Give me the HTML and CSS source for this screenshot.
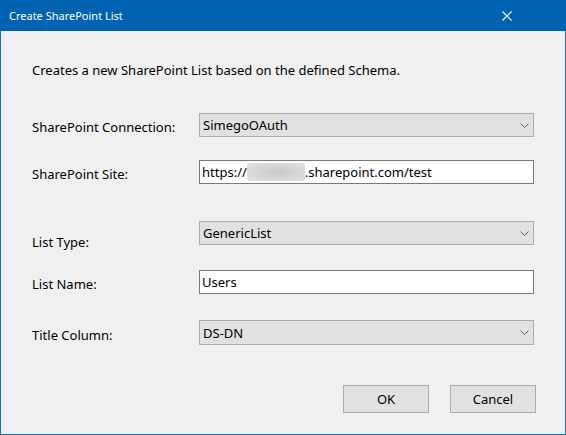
FILE: index.html
```html
<!DOCTYPE html>
<html>
<head>
<meta charset="utf-8">
<link rel="stylesheet" href="styles.css">
</head>
<body>
<div class="window">
  <div class="titlebar">
    <span class="title">Create SharePoint List</span>
    <svg class="close" width="10" height="10" viewBox="0 0 10 10"><path d="M0.5 0.5 L9.5 9.5 M9.5 0.5 L0.5 9.5" stroke="#ffffff" stroke-width="1.1" fill="none"/></svg>
  </div>
  <div class="content">
    <p class="desc">Creates a new SharePoint List based on the defined Schema.</p>
    <div class="row r1">
      <label class="lbl">SharePoint Connection:</label>
      <div class="combo"><span>SimegoOAuth</span><svg class="chev" width="9" height="5" viewBox="0 0 9 5"><path d="M0.5 0.5 L4.5 4.5 L8.5 0.5" stroke="#606060" stroke-width="1" fill="none"/></svg></div>
    </div>
    <div class="row r2">
      <label class="lbl">SharePoint Site:</label>
      <div class="textbox"><span>https://</span><span class="blur"></span><span>.sharepoint.com/test</span></div>
    </div>
    <div class="row r3">
      <label class="lbl low">List Type:</label>
      <div class="combo"><span>GenericList</span><svg class="chev" width="9" height="5" viewBox="0 0 9 5"><path d="M0.5 0.5 L4.5 4.5 L8.5 0.5" stroke="#606060" stroke-width="1" fill="none"/></svg></div>
    </div>
    <div class="row r4">
      <label class="lbl">List Name:</label>
      <div class="textbox"><span>Users</span></div>
    </div>
    <div class="row r5">
      <label class="lbl">Title Column:</label>
      <div class="combo"><span>DS-DN</span><svg class="chev" width="9" height="5" viewBox="0 0 9 5"><path d="M0.5 0.5 L4.5 4.5 L8.5 0.5" stroke="#606060" stroke-width="1" fill="none"/></svg></div>
    </div>
    <div class="buttons">
      <button class="btn">OK</button>
      <button class="btn">Cancel</button>
    </div>
  </div>
</div>
</body>
</html>
```
FILE: styles.css
```css
html, body {
  margin: 0;
  padding: 0;
}
body {
  width: 566px;
  height: 435px;
  overflow: hidden;
  font-family: "Noto Sans", "Open Sans", sans-serif;
  font-size: 13px;
  color: #000;
}
.window {
  box-sizing: border-box;
  width: 566px;
  height: 435px;
  border: 1px solid #1a6ec0;
  border-top: none;
  background: #f0f0f0;
  display: flex;
  flex-direction: column;
}
.titlebar {
  height: 31px;
  margin: 0 -1px;
  background: #0063b1;
  color: #fff;
  display: flex;
  align-items: center;
  justify-content: space-between;
  padding: 0 54px 0 9px;
  box-sizing: border-box;
  flex-shrink: 0;
}
.title {
  font-family: "Noto Sans", sans-serif;
  font-size: 11px;
  padding-bottom: 1px;
}
.close {
  display: block;
}
.content {
  padding-left: 31px;
  display: flex;
  flex-direction: column;
}
.desc {
  margin: 0;
  height: 20px;
  line-height: 20px;
  margin-top: 29px;
}
.row {
  display: flex;
  align-items: center;
  height: 24px;
}
.r1 { margin-top: 33px; }
.r2 { margin-top: 23px; }
.r3 { margin-top: 37px; }
.r4 { margin-top: 25px; }
.r5 { margin-top: 26px; height: 25px; }
.lbl {
  width: 167px;
  flex-shrink: 0;
  padding-top: 4px;
}
.lbl.low {
  padding-top: 18px;
}
.combo, .textbox {
  box-sizing: border-box;
  width: 335px;
  height: 100%;
  display: flex;
  align-items: center;
}
.combo {
  background: #e1e1e1;
  border: 1px solid #adadad;
  justify-content: space-between;
  padding-right: 4px;
  padding-left: 3px;
}
.textbox {
  background: #fff;
  border: 1px solid #7a7a7a;
  padding-left: 2px;
}
.blur {
  display: inline-block;
  width: 58px;
  height: 18px;
  background: radial-gradient(ellipse at 55% 50%, #c9c9c9 0%, #d6d6d6 50%, #e4e4e4 100%);
  border-radius: 2px;
}
.chev {
  display: block;
}
.buttons {
  display: flex;
  justify-content: flex-end;
  gap: 21px;
  padding-right: 29px;
  margin-top: 40px;
}
.btn {
  width: 86px;
  height: 28px;
  background: #e1e1e1;
  border: 1px solid #adadad;
  font-family: inherit;
  font-size: 13px;
  color: #000;
  padding: 0;
  margin: 0;
}
```
